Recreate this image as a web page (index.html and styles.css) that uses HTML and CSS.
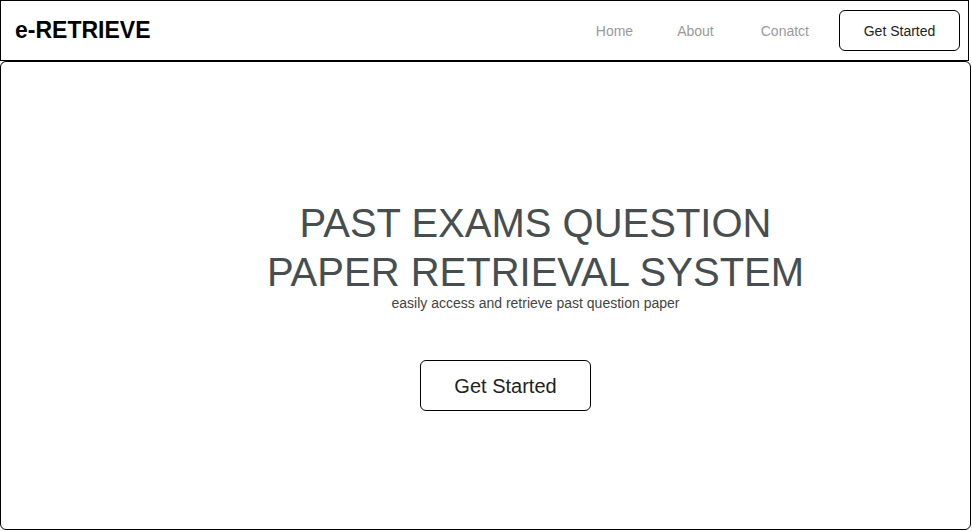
FILE: index.html
```html
<!DOCTYPE html>
<html lang="en">
<head>
<meta charset="utf-8">
<title>e-RETRIEVE</title>
<link rel="stylesheet" href="styles.css">
</head>
<body>
<header class="topbar">
  <div class="logo">e-RETRIEVE</div>
  <nav class="nav">
    <a class="nav-link" href="#">Home</a>
    <a class="nav-link" href="#">About</a>
    <a class="nav-link nav-link--wide" href="#">Conatct</a>
    <button class="btn btn--small">Get Started</button>
  </nav>
</header>
<main class="hero">
  <div class="hero-inner">
    <h1 class="hero-title">PAST EXAMS QUESTION<br>PAPER RETRIEVAL SYSTEM</h1>
    <p class="hero-sub">easily access and retrieve past question paper</p>
    <button class="btn btn--large">Get Started</button>
  </div>
</main>
</body>
</html>
```
FILE: styles.css
```css
* { box-sizing: border-box; }

html, body {
  margin: 0;
  padding: 0;
  background: #fff;
  font-family: "Liberation Sans", Arial, sans-serif;
}

.topbar {
  width: 969px;
  height: 61px;
  border: 1px solid #000;
  display: flex;
  align-items: center;
  padding: 0 8px 0 14px;
}

.logo {
  font-size: 23px;
  font-weight: bold;
  color: #000;
  margin-top: -1px;
}

.nav {
  margin-left: auto;
  display: flex;
  align-items: center;
}

.nav-link {
  font-size: 14px;
  color: #9a9a9a;
  text-decoration: none;
  margin-right: 44px;
  margin-top: 1px;
}

.nav-link--wide { margin-left: 3px; margin-right: 30px; }

.btn {
  font-family: "Liberation Sans", Arial, sans-serif;
  background: #fff;
  border: 1px solid #000;
  color: #222;
  cursor: pointer;
  padding: 0;
}

.btn--small {
  width: 121px;
  height: 41px;
  border-radius: 6px;
  font-size: 14px;
}

.hero {
  width: 971px;
  height: 469px;
  border: 1px solid #000;
  border-radius: 6px;
  padding-top: 137px;
}

.hero-inner {
  margin-left: 100px;
  display: flex;
  flex-direction: column;
  align-items: center;
  text-align: center;
}

.hero-title {
  margin: 0;
  font-size: 40px;
  font-weight: normal;
  line-height: 49px;
  color: #464e50;
}

.hero-sub {
  margin: -2px 0 0;
  font-size: 14px;
  color: #444;
}

.btn--large {
  margin-top: 49px;
  margin-right: 60px;
  width: 171px;
  height: 51px;
  border-radius: 6px;
  font-size: 20px;
  padding-top: 2px;
}
```
